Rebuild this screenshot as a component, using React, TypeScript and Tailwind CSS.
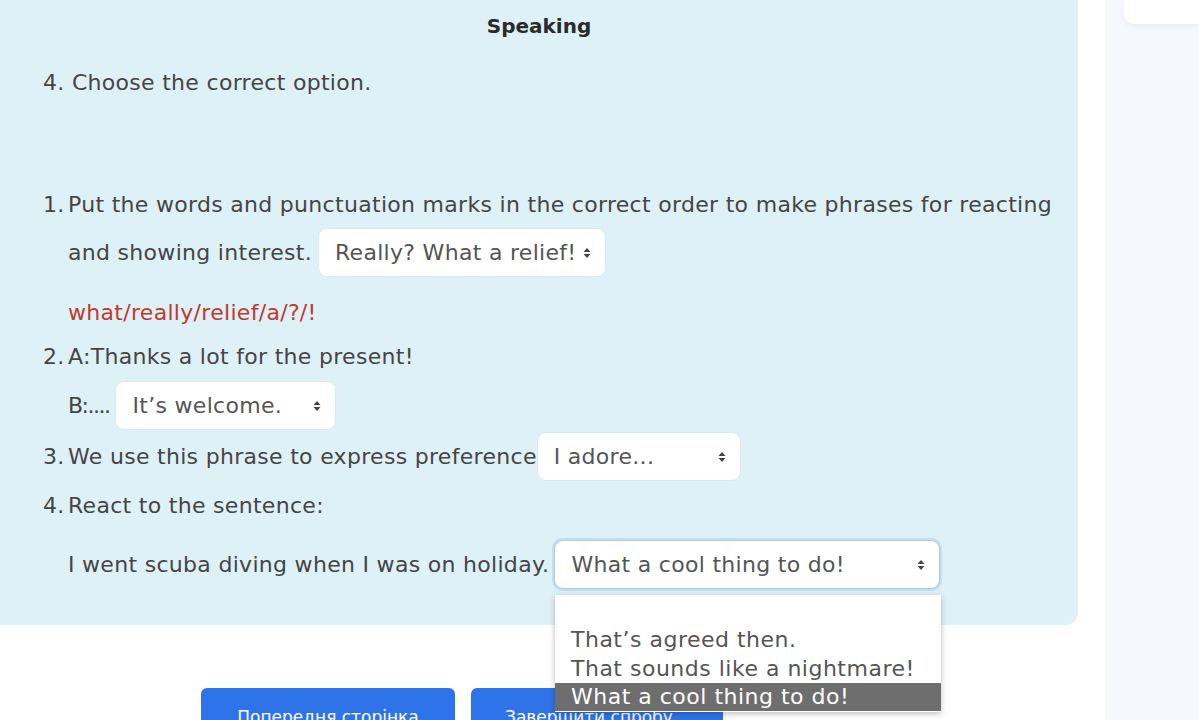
import React from "react";

const Arrows = () => (
  <svg width="8" height="12" viewBox="0 0 8 12" className="shrink-0">
    <path d="M4 1 L7.5 5 L0.5 5 Z" fill="#444" />
    <path d="M4 11 L7.5 7 L0.5 7 Z" fill="#444" />
  </svg>
);

const Select = ({ text, w, focused, gap }: { text: string; w?: string; focused?: boolean; gap?: string }) => (
  <div
    className={
      "h-[49px] shrink-0 flex items-center justify-between pl-[16px] pr-[14px] bg-white rounded-[9px] text-[#555] " +
      (focused
        ? "border border-[#a9cbe8] shadow-[0_0_0_2px_rgba(160,200,235,0.45)] "
        : "border border-[#dde8ee] ") +
      (w ?? "")
    }
  >
    <span className={"whitespace-nowrap " + (gap ?? "mr-[10px]")}>{text}</span>
    <Arrows />
  </div>
);

export default function App() {
  return (
    <div
      className="w-[1199px] h-[720px] bg-white flex overflow-hidden relative text-[#454545]"
      style={{ fontFamily: '"DejaVu Sans", "Noto Sans", sans-serif' }}
    >
      <div className="w-[1078px] shrink-0 flex flex-col">
        <div className="h-[625px] shrink-0 bg-[#def1f7] rounded-br-[12px] text-[22px] tracking-[0.3px] relative">
          <div className="h-[28px] mt-[12px] flex items-center justify-center font-bold text-[#2b2b2b] text-[20px] tracking-normal">
            Speaking
          </div>
          <div className="h-[28px] mt-[28px] flex items-center pl-[43px]">4. Choose the correct option.</div>

          <div className="h-[28px] mt-[94px] flex items-center pl-[43px]">
            <span className="w-[25px]">1.</span>
            <span className="whitespace-nowrap">Put the words and punctuation marks in the correct order to make phrases for reacting</span>
          </div>
          <div className="mt-[10px] flex items-center pl-[68px] gap-[6px]">
            <span>and showing interest.</span>
            <Select text="Really? What a relief!" gap="mr-[7px]" />
          </div>
          <div className="h-[28px] mt-[21px] flex items-center pl-[68px] text-[#c0392f]">what/really/relief/a/?/!</div>

          <div className="h-[28px] mt-[16px] flex items-center pl-[43px]">
            <span className="w-[25px]">2.</span>
            <span>A:Thanks a lot for the present!</span>
          </div>
          <div className="mt-[11px] flex items-center pl-[68px] gap-[6px]">
            <span className="tracking-[-1.5px]">B:....</span>
            <Select text="It’s welcome." w="w-[221px]" />
          </div>

          <div className="mt-[2px] flex items-center pl-[43px]">
            <span className="flex whitespace-nowrap">
              <span className="w-[25px]">3.</span>
              <span>We use this phrase to express preference</span>
            </span>
            <Select text="I adore..." w="w-[204px]" />
          </div>

          <div className="h-[28px] mt-[10px] flex items-center pl-[43px]">
            <span className="w-[25px]">4.</span>
            <span>React to the sentence:</span>
          </div>
          <div className="mt-[21px] flex items-center pl-[68px] gap-[5px]">
            <span className="whitespace-nowrap">I went scuba diving when I was on holiday.</span>
            <Select text="What a cool thing to do!" w="w-[386px]" focused />
          </div>

          <div className="absolute left-[555px] top-[595px] w-[386px] bg-white shadow-[0_2px_6px_rgba(0,0,0,0.25)] z-10 text-[22px] tracking-[0.5px] text-[#555] pt-[30px] pb-[1px]">
            <div className="h-[29px] leading-[29px] pl-[16px] whitespace-nowrap">That’s agreed then.</div>
            <div className="h-[29px] leading-[29px] pl-[16px] whitespace-nowrap">That sounds like a nightmare!</div>
            <div className="h-[28px] leading-[28px] pl-[16px] bg-[#6e6e6e] text-white whitespace-nowrap">What a cool thing to do!</div>
          </div>
        </div>

        <div className="flex gap-[16px] pl-[201px] mt-[63px] shrink-0">
          <div className="w-[254px] h-[60px] bg-[#2f73ea] rounded-[6px] text-white text-[17px] flex justify-center pt-[17px]">
            Попередня сторінка
          </div>
          <div className="w-[252px] h-[60px] bg-[#2f73ea] rounded-[6px] text-white text-[17px] flex justify-center pt-[17px]">
            Завершити спробу...
          </div>
        </div>
      </div>
      <div className="w-[27px] shrink-0" />
      <div className="flex-1 bg-[#f5f8fd] flex flex-col">
        <div className="ml-[19px] h-[24px] bg-white rounded-bl-[10px] shadow-[0_2px_4px_rgba(180,190,220,0.2)]" />
      </div>
    </div>
  );
}
